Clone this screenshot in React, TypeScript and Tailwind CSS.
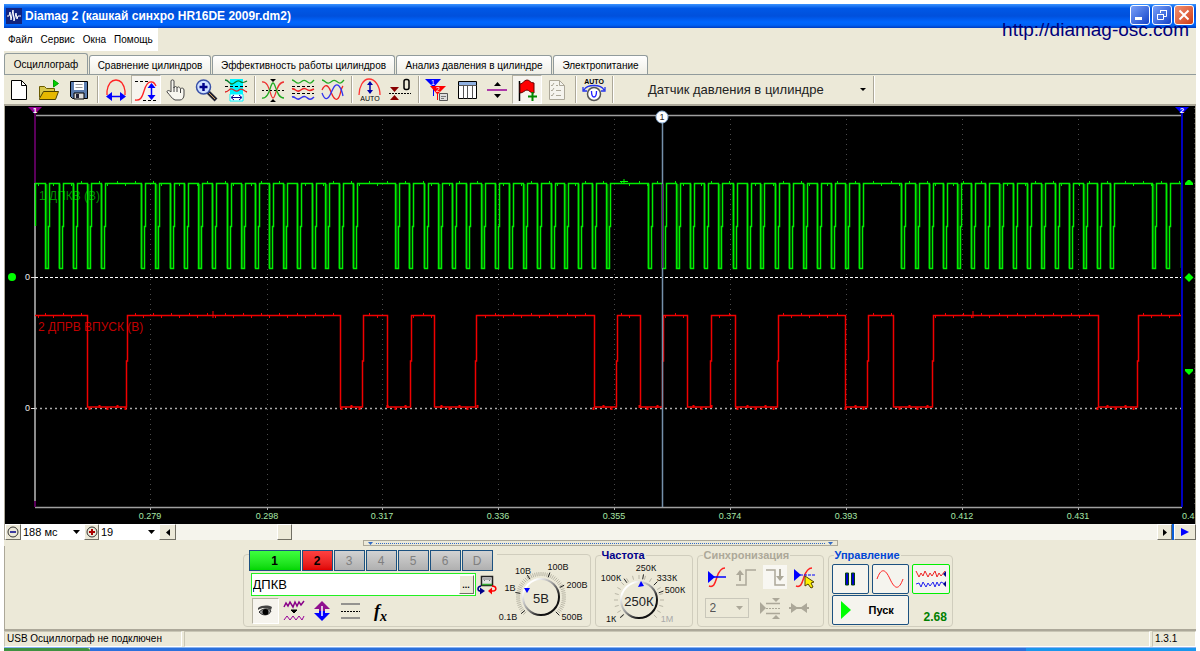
import type { ReactNode } from "react";

const MENU = ["Файл", "Сервис", "Окна", "Помощь"];

const TABS = [
  { label: "Осциллограф", width: "w-[84px]" },
  { label: "Сравнение цилиндров", width: "w-[122px]" },
  { label: "Эффективность работы цилиндров", width: "w-[183px]" },
  { label: "Анализ давления в цилиндре", width: "w-[156px]" },
  { label: "Электропитание", width: "w-[95px]" },
];

// spots where the crankshaft signal drops
const CRANK = [
  46, 60, 74, 88, 102,
  142, 156, 171, 185, 199, 213, 228, 242, 256, 270, 284, 298, 313, 326, 340, 354,
  396, 410, 425, 439, 453, 467, 482, 496, 510, 524, 538, 552, 565, 579, 593, 607,
  649, 663, 677, 691, 705, 719, 734, 748, 761, 776, 790, 804, 818, 832, 846, 860,
  902, 916, 930, 944, 958, 972, 986, 1000, 1014, 1028, 1042, 1056, 1070, 1084, 1098, 1111,
  1153, 1167,
];

// camshaft signal: [drop, rise]
const CAM = [
  [87, 127], [340, 363], [387, 411], [434, 476], [594, 617], [640, 663],
  [687, 711], [735, 778], [845, 868], [893, 933], [1098, 1138],
];

const GRID = [
  { x: 150, label: "0.279" },
  { x: 267, label: "0.298" },
  { x: 382, label: "0.317" },
  { x: 498, label: "0.336" },
  { x: 614, label: "0.355" },
  { x: 730, label: "0.374" },
  { x: 846, label: "0.393" },
  { x: 962, label: "0.412" },
  { x: 1078, label: "0.431" },
];

function crankPath() {
  let d = "M35.5 226V183.5";
  CRANK.forEach((x) => {
    d += `H${x - 0.5}V268.5H${x + 2.5}V226.5H${x + 3.5}V183.5`;
  });
  return d + "H1181.5V268";
}

function crankShade() {
  return CRANK.map((x, i) => `M${x + (i % 3 === 0 ? 0.5 : -0.5)} 184V268`).join("");
}

function camPath() {
  let d = "M35 315.5";
  CAM.forEach(([a, b]) => {
    d += `H${a + 0.5}V407H${b - 0.5}V361H${b + 0.5}V315.5`;
  });
  return d + "H1182";
}

// short ticks along the flat parts
function noise(y: number, skip: (x: number) => boolean) {
  let d = "";
  for (let x = 38; x < 1180; x += 5 + ((x * 7) % 6)) {
    if (!skip(x)) d += `M${x + 0.5} ${y + (x % 3) - 2}v3`;
  }
  return d;
}

const inCrank = (x: number) => CRANK.some((c) => x >= c - 1 && x <= c + 4);
const inCam = (x: number) => CAM.some(([a, b]) => x >= a - 1 && x <= b + 1);

function Scope() {
  return (
    <svg viewBox="5 106 1190 418" className="block w-full bg-black" fontFamily="'Liberation Sans', Arial, sans-serif">
      {/* сетка */}
      <g stroke="#4a4a4a" strokeDasharray="1 4">
        {GRID.map((g) => <path key={g.x} d={`M${g.x + 0.5} 119V507`} />)}
        <path d="M1194.5 108V507" />
      </g>
      <path d="M35 115.5H1182M35 507.5H1182" stroke="#a0a0a0" strokeWidth="1.500" />
      <path d="M35 183V507" stroke="#8c8c8c" strokeWidth="2" />
      <path d="M35 108V183M35 501V507" stroke="#5a005a" strokeWidth="2" />
      <path d="M31 277.5H36M31 408.5H36" stroke="#ddd" />
      <path d="M35 277.5H1182" stroke="#fff" strokeDasharray="3 2" />
      <path d="M35 408.5H1182" stroke="#aaa" strokeWidth="1.500" strokeDasharray="2 3" />

      <text x="39" y="200" fontSize="12" fill="#009000">1 ДПКВ (В)</text>
      <text x="38" y="331" fontSize="12" fill="#c00000">2 ДПРВ ВПУСК (В)</text>

      <path d={crankShade()} stroke="#008000" strokeWidth="2" />
      <path d={crankPath()} fill="none" stroke="#00ee00" strokeWidth="1.500" />
      <path d={noise(183, inCrank)} stroke="#00e800" />
      <path d="M115 183.5h10M620 181.5h8M624 179v4" stroke="#00ff00" />
      <path d={camPath()} fill="none" stroke="#f00000" strokeWidth="1.500" />
      <path d={noise(315, inCam)} stroke="#f00000" />
      <path d={noise(407, (x) => !inCam(x))} stroke="#f00000" strokeWidth="2" />
      <path d="M213 311v7M973 311v7" stroke="#ff0000" />

      {/* курсоры */}
      <path d="M662.5 122V507" stroke="#7590aa" strokeWidth="1.500" />
      <path d="M662.5 184V268" stroke="#6c1690" />
      <circle cx="662" cy="117" r="6" fill="#fff" stroke="#8fb4dd" />
      <text x="662" y="120" fontSize="9" textAnchor="middle" fill="#222">1</text>
      <path d="M1182 112V507" stroke="#0000c0" strokeWidth="2" />
      <path d="M28 107h14l-7 7z" fill="#900090" />
      <path d="M1175 107h14l-7 7z" fill="#0000ff" />
      <g fontSize="8" fontWeight="bold" fill="#fff" textAnchor="middle">
        <text x="35" y="113">1</text>
        <text x="1182" y="113">2</text>
      </g>
      <g fill="#00ff00">
        <circle cx="12" cy="277" r="4" />
        <path d="M1185 185h8v-2l-3-3h-2l-3 3z" />
        <path d="M1189 273l4.500 4.500-4.500 4.500-4.500-4.500z" />
        <path d="M1185 369h8v2l-4 4-4-4z" />
      </g>

      <g fontSize="9" fill="#eee">
        <text x="25" y="280">0</text>
        <text x="25" y="411">0</text>
      </g>
      <g fontSize="9" fill="#a6e6a6">
        {GRID.map((g) => <text key={g.x} x={g.x} y="519" textAnchor="middle">{g.label}</text>)}
        <text x="1182" y="519">0.4</text>
      </g>
      <g stroke="#aaa">{GRID.map((g) => <path key={g.x} d={`M${g.x + 0.5} 508v2`} />)}</g>
    </svg>
  );
}

function Icon({ children }: { children: ReactNode }) {
  return (
    <svg viewBox="0 0 24 24" className="h-6 w-6" fill="none" stroke="#000" aria-hidden="true">
      {children}
    </svg>
  );
}

function Tool({ label, pressed, children }: { label: string; pressed?: boolean; children: ReactNode }) {
  return (
    <button
      type="button"
      aria-label={label}
      aria-pressed={pressed}
      className={`flex h-[29px] w-[30px] items-center justify-center ${pressed ? "border border-t-[#b5b2a2] border-r-white border-b-white border-l-[#b5b2a2] bg-[#f6f4ee]" : ""}`}
    >
      <Icon>{children}</Icon>
    </button>
  );
}

function Sep() {
  return (
    <div className="flex w-[7px] justify-center">
      <div className="h-[27px] w-[2px] border-r border-l border-r-white border-l-[#aca899]" />
    </div>
  );
}

function Toolbar() {
  return (
    <div className="flex h-[30px] items-center border-t border-[#919b9c] bg-[#ece9d8]">
      <Tool label="Новый">
        <path d="M4.500 2.500h10l5 5v14h-15z" fill="#fff" />
        <path d="M14.500 2.500v5h5" />
      </Tool>
      <Tool label="Открыть">
        <path d="M2.500 19.500v-11h5l2 2h8v3" fill="#d8c84c" stroke="#6b5c00" />
        <path d="M2.500 20.500l4-7h15l-3 8h-16z" fill="#e6b800" stroke="#4d4200" />
        <path d="M16.500 2v7l5-3.500z" fill="#00d000" stroke="#00a000" />
      </Tool>
      <Tool label="Сохранить">
        <path d="M3.500 3.500h17v17h-15l-2-2z" fill="#5a7cae" />
        <path d="M7 4h10v8h-10z" fill="#fff" stroke="none" />
        <path d="M8.500 6.500h7M8.500 9.500h7" stroke="#999" />
        <path d="M7 15h10v6h-10z" fill="#ddd" />
        <path d="M9 16h3v4h-3z" fill="#223" stroke="none" />
      </Tool>
      <Sep />
      <Tool label="Масштаб по горизонтали">
        <path d="M3 17v-4c1-6 4-11 9-11s8 5 9 11v4" stroke="#f22" strokeWidth="1.300" />
        <path d="M5 18.500h14" stroke="#00f" strokeWidth="1.500" />
        <path d="M2 18.500l6-4.500v9zM22 18.500l-6-4.500v9z" fill="#00f" stroke="none" />
      </Tool>
      <Tool label="Масштаб по вертикали" pressed>
        <path d="M1 3.500h14M9 22.500h14" strokeDasharray="3 2" />
        <path d="M1 22c5 1 7-2 9-9s4-10 8-9c2 0 3 2 4 4" stroke="#f22" strokeWidth="1.300" />
        <path d="M17.500 7v13" stroke="#00f" strokeWidth="1.500" />
        <path d="M17.500 5l-4 5h8zM17.500 22l-4-5h8z" fill="#00f" stroke="none" />
      </Tool>
      <Tool label="Перемещение">
        <path d="M7 14V3c0-1.500 3-1.500 3 0v7c0-2 3-2 3 0 1-2 3-1 3.500 1 1-1.500 3.500-1 3.500 1v5c0 3-2 5-4 5h-5c-3-1-5-5-8-8 0-2 2-2 4 0" fill="#f8f7f0" stroke="#444" />
        <path d="M10 9v5M13 10v4M16.500 11v4" stroke="#444" />
      </Tool>
      <Tool label="Увеличить">
        <path d="M14 14l8 8" strokeWidth="4" stroke="#223" />
        <path d="M15 15l6 6" stroke="#d0a060" />
        <circle cx="9.500" cy="9" r="7" fill="#cfe0ff" stroke="#3850a8" strokeWidth="1.500" />
        <path d="M5.500 9h8M9.500 5v8" stroke="#00008b" strokeWidth="2.500" />
      </Tool>
      <Tool label="Область">
        <path d="M6 1h13v22H6z" fill="#00f4ff" stroke="none" />
        <path d="M1 2c4 0 4 4 7 4s4-4 7-3 3 3 8 0" stroke="#087a28" strokeWidth="1.300" />
        <path d="M1 8.500h22" strokeDasharray="3 2" />
        <path d="M1 14c4 0 4-4 7-3s4 4 7 1 4 1 8 2" stroke="#d22" strokeWidth="1.300" />
        <path d="M6 16h13v7H6z" fill="#fff" stroke="#00f4ff" />
        <path d="M8 19.500h9M10 17l-3 2.500 3 2.500M15 17l3 2.500-3 2.500" stroke="#008" />
      </Tool>
      <Sep />
      <Tool label="Центр">
        <path d="M1 4c8-1 8 16 11 16s3-16 11-16" stroke="#e33" strokeWidth="1.300" />
        <path d="M1 20c8 1 8-15 11-15s3 15 11 15" stroke="#2a2" strokeWidth="1.300" />
        <path d="M1 12.500h22" strokeDasharray="2 2" />
        <path d="M9 1h6l-3 3zM9 24h6l-3-3z" fill="#000" stroke="none" />
      </Tool>
      <Tool label="Разнести">
        <path d="M1 2c3 0 4 4 7 3s4-4 7-2 4 4 8-1" stroke="#2a2" strokeWidth="1.300" />
        <path d="M1 8.500h22M1 15.500h22" strokeDasharray="3 2" />
        <path d="M1 11c3-1 4 3 7 2s4-4 7-2 4 2 8 0" stroke="#e22" strokeWidth="1.500" />
        <path d="M1 19c3-1 4 3 7 2s4-4 7-2 4 4 8 0" stroke="#33e" strokeWidth="1.500" />
      </Tool>
      <Tool label="Совместить">
        <path d="M1 2c3 0 4 4 7 3s4-4 7-2 4 4 8-1" stroke="#2a2" strokeWidth="1.300" />
        <path d="M1 12c3-6 6-6 9 2s6 9 8 5 2-9 4-11" stroke="#e22" strokeWidth="1.300" />
        <path d="M1 15c3 8 6 7 9 0s5-10 8-7 3 6 4 10" stroke="#33e" strokeWidth="1.300" />
      </Tool>
      <Sep />
      <Tool label="Авто масштаб">
        <path d="M1 17c0-8 4-16 10-16s11 7 11 16" stroke="#f33" strokeWidth="1.300" />
        <path d="M12 5v8" stroke="#00a" strokeWidth="1.500" />
        <path d="M12 3l-3 4h6zM12 16l-3-4h6z" fill="#00a" stroke="none" />
        <text x="12" y="23" fontSize="7" textAnchor="middle" fill="#000" stroke="none" fontFamily="Liberation Sans, sans-serif">AUTO</text>
      </Tool>
      <Tool label="Установить ноль">
        <path d="M2 9h9l-4.500 5zM2 22h9l-4.500-5z" fill="#800" stroke="none" />
        <path d="M1 15.500h22" strokeDasharray="2 1" />
        <rect x="16" y="1.500" width="5" height="10" rx="2" strokeWidth="1.500" />
      </Tool>
      <Sep />
      <Tool label="Маркеры">
        <path d="M0 1h16L9 9v9H8V9z" fill="#00f" stroke="none" />
        <path d="M5 8h16l-8 8v6h-1v-6z" fill="#f00" stroke="none" />
        <path d="M14.500 15.500h8v7h-8z" fill="#ddd" stroke="#555" />
        <path d="M16 18.500h5M16 20.500h3" stroke="#777" />
        <text x="6" y="7" fontSize="7" fill="#fff" stroke="none">1</text>
        <text x="11" y="14" fontSize="7" fill="#fff" stroke="none">2</text>
      </Tool>
      <Tool label="Таблица">
        <path d="M3.500 3.500h18v17h-18z" fill="#fff" />
        <path d="M4 4h17v3H4z" fill="#8fb0e0" stroke="none" />
        <path d="M3.500 7.500h18M8.500 7.500v13M12.500 7.500v13M17.500 7.500v13" stroke="#555" />
      </Tool>
      <Tool label="Разделить">
        <path d="M2 12h20" stroke="#909" strokeWidth="1.500" />
        <path d="M9 8h7l-3.500-4zM9 16h7l-3.500 4z" fill="#000" stroke="none" />
      </Tool>
      <Tool label="Добавить флаг" pressed>
        <path d="M4.500 3v20" strokeWidth="1.500" />
        <path d="M5 6c3 0 4-4 7-4s3 3 7 3v10c-4 0-5-3-7-3s-4 3-7 3z" fill="#f00" stroke="#600" />
        <path d="M17.500 14v9M13 18.500h9" stroke="#080" strokeWidth="2" />
      </Tool>
      <Tool label="Список">
        <path d="M4.500 2.500h10l5 5v14h-15z" fill="#f5f4ee" stroke="#aca899" />
        <path d="M14.500 2.500v5h5M6 7l1 1 2-3M6 12l1 1 2-3M6 17l1 1 2-3M11 7.500h2M11 12.500h5M11 17.500h5" stroke="#aca899" />
      </Tool>
      <Sep />
      <Tool label="Авто напряжение">
        <text x="12" y="6" fontSize="7" fontWeight="bold" textAnchor="middle" fill="#000" stroke="none" fontFamily="Liberation Sans, sans-serif">AUTO</text>
        <circle cx="12" cy="16" r="6.500" fill="#fff" stroke="#555" strokeWidth="1.500" />
        <path d="M9.500 13c0 8 5 8 5 0" stroke="#22f" strokeWidth="1.300" />
        <path d="M2 12c3-6 17-6 20 0M1 9v4h4M23 9v4h-4" stroke="#23e" strokeWidth="1.300" />
      </Tool>
      <Sep />
      <button type="button" className="flex h-[28px] w-[254px] items-center justify-between pr-1 pl-8 text-[13px] text-[#222]">
        Датчик давления в цилиндре
        <svg viewBox="0 0 6 4" className="h-1 w-1.5" aria-hidden="true"><path d="M0 0h6L3 3z" /></svg>
      </button>
      <Sep />
    </div>
  );
}

function Dropdown({ label, value, width }: { label: string; value: string; width: string }) {
  return (
    <div className={`relative bg-white ${width}`}>
      <select aria-label={label} className="block h-4 w-full appearance-none px-[2px] text-[11px] leading-4 text-black">
        <option>{value}</option>
      </select>
      <svg viewBox="0 0 7 4" className="pointer-events-none absolute top-1.5 right-1 h-1 w-[7px]" aria-hidden="true">
        <path d="M0 0h7L3.500 4z" />
      </svg>
    </div>
  );
}

const RAISED = "flex h-4 items-center justify-center border border-t-white border-r-[#716f64] border-b-[#716f64] border-l-white bg-[#ece9d8]";

function ScrollRow() {
  return (
    <div className="flex h-4 border-l border-[#aca899] bg-white">
      <button type="button" aria-label="Уменьшить" className={`${RAISED} w-[16px]`}>
        <svg viewBox="0 0 12 12" className="h-3 w-3" fill="none" stroke="#333" aria-hidden="true">
          <circle cx="6" cy="6" r="5" /><path d="M3 6h6" stroke="#00008b" strokeWidth="1.500" />
        </svg>
      </button>
      <Dropdown label="Развёртка" value="188 мс" width="w-[63px]" />
      <button type="button" aria-label="Увеличить" className={`${RAISED} w-[15px]`}>
        <svg viewBox="0 0 12 12" className="h-3 w-3" fill="none" stroke="#333" aria-hidden="true">
          <circle cx="6" cy="6" r="5" /><path d="M3 6h6M6 3v6" stroke="#a00" strokeWidth="2" />
        </svg>
      </button>
      <Dropdown label="Делений" value="19" width="w-[60px]" />
      <button type="button" aria-label="Влево" className={`${RAISED} w-[17px]`}>
        <svg viewBox="0 0 4 7" className="h-[7px] w-1" aria-hidden="true"><path d="M4 0v7L0 3.500z" /></svg>
      </button>
      <div className="flex flex-1 bg-[#f5f4ec] pl-[101px]">
        <div className={`${RAISED} w-[15px]`} />
      </div>
      <button type="button" aria-label="Вправо" className={`${RAISED} w-[15px]`}>
        <svg viewBox="0 0 4 7" className="h-[7px] w-1" aria-hidden="true"><path d="M0 0v7l4-3.500z" /></svg>
      </button>
      <div className="w-[2px] bg-[#0a5fd8]" />
      <button type="button" aria-label="Воспроизвести" className={`${RAISED} w-[22px]`}>
        <svg viewBox="0 0 8 8" className="h-2 w-2" aria-hidden="true"><path d="M0 0v8l8-4z" fill="#00f" /></svg>
      </button>
    </div>
  );
}

type Mark = { text: string; x: number; y: number; muted?: boolean };

const VOLTS: Mark[] = [
  { text: "10В", x: 523, y: 574 },
  { text: "100В", x: 558, y: 570 },
  { text: "1В", x: 510, y: 591 },
  { text: "200В", x: 577, y: 588 },
  { text: "0.1В", x: 508, y: 620 },
  { text: "500В", x: 572, y: 620 },
];

const FREQS: Mark[] = [
  { text: "250К", x: 645, y: 571 },
  { text: "100К", x: 610, y: 581 },
  { text: "333К", x: 666, y: 581 },
  { text: "500К", x: 674, y: 593 },
  { text: "1К", x: 610, y: 622 },
  { text: "1М", x: 666, y: 622, muted: true },
];

function ray(cx: number, cy: number, deg: number, r1: number, r2: number) {
  const a = (deg * Math.PI) / 180;
  const c = Math.cos(a);
  const s = Math.sin(a);
  return `M${cx + r1 * c} ${cy + r1 * s}L${cx + r2 * c} ${cy + r2 * s}`;
}

function Knob({ id, cx, cy, value, marks, step, major }: {
  id: string; cx: number; cy: number; value: string; marks: Mark[]; step: number; major: number[];
}) {
  const minor: string[] = [];
  for (let d = 135; d <= 405; d += step) minor.push(ray(cx, cy, d, 21, 25));
  return (
    <g fontFamily="'Liberation Sans', Arial, sans-serif">
      <defs>
        <linearGradient id={id} x1="0.1" y1="0.1" x2="0.85" y2="0.85">
          <stop offset="0.1" stopColor="#fff" />
          <stop offset="0.5" stopColor="#999" />
          <stop offset="0.85" stopColor="#111" />
        </linearGradient>
      </defs>
      <path d={minor.join("")} stroke="#b9b6a6" />
      <path d={major.map((d) => ray(cx, cy, d, 21, 26)).join("")} stroke="#222" />
      <circle cx={cx} cy={cy} r="18" fill="#ece9d8" stroke={`url(#${id})`} strokeWidth="2" />
      <text x={cx} y={cy + 6} fontSize="13" textAnchor="middle" fill="#222">{value}</text>
      <g fontSize="9" textAnchor="middle">
        {marks.map((m) => <text key={m.text} x={m.x} y={m.y} fill={m.muted ? "#aaa" : "#111"}>{m.text}</text>)}
      </g>
    </g>
  );
}

function Channels() {
  return (
    <section aria-label="Каналы" className="mt-[5px] flex h-[73px] w-[348px] rounded border border-[#d0cdbd]">
      <div className="-mt-[5px] w-[253px] pl-[5px]">
        <div className="flex gap-px bg-[#ece9d8] text-[12px] font-bold">
          <button type="button" className="h-[21px] w-[52px] border border-[#1c5180] bg-linear-to-b from-[#3dff3d] to-[#00d600]">1</button>
          <button type="button" className="h-[21px] w-[31px] border border-[#1c5180] bg-linear-to-b from-[#ff4040] to-[#e00000]">2</button>
          {["3", "4", "5", "6", "D"].map((c) => (
            <button key={c} type="button" className="h-[21px] w-[31px] border border-[#1c5180] bg-linear-to-b from-[#d2d2d2] to-[#b0b0b0] font-normal text-[#808080]">{c}</button>
          ))}
        </div>
        <div className="mt-[2px] flex items-center gap-px pl-0.5">
          <div className="flex h-[23px] w-[225px] flex-none border border-[#22f022] bg-white">
            <input aria-label="Название канала" defaultValue="ДПКВ" className="w-full min-w-0 flex-1 px-px text-[13px] text-black outline-none" />
            <button type="button" aria-label="Выбрать" className="m-px w-[15px] border border-t-white border-r-[#716f64] border-b-[#716f64] border-l-white bg-[#ece9d8] text-[9px] leading-3 font-bold">...</button>
          </div>
          <svg viewBox="0 0 20 20" className="h-5 w-5 flex-none" fill="none" stroke="#222" aria-hidden="true">
            <path d="M4.500 1.500h11v9h-11z" fill="#e4e4e4" strokeWidth="1.500" />
            <path d="M6 4h8M7 6l1-1M12 5l1 1" stroke="#777" />
            <path d="M5 9.500h10" stroke="#3a3" strokeWidth="1.500" />
            <path d="M4 11c-4 1-4 5 0 5" stroke="#008" strokeWidth="1.500" />
            <path d="M3 12.500l5 3.500-5 3.500z" fill="#008" stroke="none" />
            <path d="M15 11c5 0 5 5 1 5h-2" stroke="#f00" strokeWidth="1.500" />
            <path d="M15 12.500l-4 3.500 4 3.500z" fill="#f00" stroke="none" />
          </svg>
        </div>
        <div className="mt-0.5 flex gap-[2px] pl-[3px]">
          <button type="button" aria-label="Видимость" aria-pressed="true" className="flex h-[26px] w-[27px] items-center justify-center border border-t-[#b5b2a2] border-r-white border-b-white border-l-[#b5b2a2] bg-[#f6f4ee]">
            <svg viewBox="0 0 16 14" className="h-[14px] w-4" aria-hidden="true">
              <path d="M1 4c4-3 10-3 14-1l-1 3c-4-2-8-3-13 0z" fill="#444" />
              <path d="M2 8c4-4 9-4 12-1-2 5-9 5-12 1z" fill="#999" stroke="#333" />
              <circle cx="8.500" cy="8" r="3" />
            </svg>
          </button>
          <button type="button" aria-label="Сглаживание" className="flex h-[26px] w-[26px] items-center justify-center">
            <Icon>
              <path d="M2 8l2-4 2 3 2-4 3 5 2-5 2 4 2-4 2 3 3-4" stroke="#808" strokeWidth="1.500" />
              <path d="M9 11h6l-3 3z" fill="#000" />
              <path d="M2 21l3-4 3 4 3-4 3 4 3-4 3 4 2-4" stroke="#909" />
            </Icon>
          </button>
          <button type="button" aria-label="Смещение" className="flex h-[26px] w-[27px] items-center justify-center">
            <Icon>
              <path d="M12 2l8 8h-5v2H9v-2H4z" fill="#90108f" stroke="none" />
              <path d="M12 22l8-8h-5v-2H9v2H4z" fill="#00f" stroke="none" />
              <path d="M12 7v10" stroke="#fff" strokeWidth="1.500" />
            </Icon>
          </button>
          <button type="button" aria-label="Уровни" className="flex h-[26px] w-[26px] items-center justify-center">
            <Icon>
              <path d="M2 5h19M2 19h19" stroke="#777" strokeWidth="1.500" />
              <path d="M2 12.500h19" strokeDasharray="2 1" />
            </Icon>
          </button>
          <button type="button" aria-label="Функция" className="h-[26px] w-[30px] font-['Liberation_Serif',serif] text-[18px] leading-5 font-bold italic">f<sub className="text-[14px]">x</sub></button>
        </div>
      </div>
      <svg viewBox="497 555 93 71" className="h-[71px] w-[93px]" role="img" aria-label="Масштаб 5В">
        <Knob id="k1" cx={541} cy={597} value="5В" marks={VOLTS} step={5} major={[140, 190, 238, 290, 333, 405]} />
        <path d="M524 588h6l-3 5z" fill="#00f" />
      </svg>
    </section>
  );
}

function Legend({ children, color }: { children: ReactNode; color: string }) {
  return <legend className={`ml-[5px] px-px text-[11px] leading-3 font-bold ${color}`}>{children}</legend>;
}

function Controls() {
  return (
    <div className="flex h-[83px] justify-center gap-1 border-l border-[#aca899] pt-[3px] pr-1.5">
      <Channels />

      <fieldset className="h-[78px] w-[98px] rounded border border-[#d0cdbd]">
        <Legend color="text-[#00008b]">Частота</Legend>
        <svg viewBox="595 561 96 66" className="h-[66px] w-[96px]" role="img" aria-label="Частота 250К">
          <Knob id="k2" cx={638} cy={600} value="250К" marks={FREQS} step={15} major={[137, 235, 280, 315, 340]} />
          <path d="M637 587l6-1-3-5z" fill="#00f" />
        </svg>
      </fieldset>

      <fieldset className="h-[78px] w-[127px] rounded border border-[#d0cdbd]">
        <Legend color="text-[#aca899]">Синхронизация</Legend>
        <div className="mt-1 flex justify-between px-[7px]">
          <button type="button" aria-label="По уровню">
            <Icon>
              <path d="M4 21c5 2 6-3 8-9s4-9 8-9" stroke="#f22" strokeWidth="1.500" />
              <path d="M3 12h18" stroke="#00f" strokeWidth="1.500" /><path d="M3 6v12l7-6z" fill="#00f" stroke="none" />
            </Icon>
          </button>
          <button type="button" aria-label="По фронту" disabled>
            <Icon>
              <path d="M2 20h10V5h10" stroke="#aca899" strokeWidth="1.500" />
              <path d="M6 16V9" stroke="#aca899" strokeWidth="2" /><path d="M6 5l-4 5h8z" fill="#aca899" stroke="none" />
            </Icon>
          </button>
          <button type="button" aria-label="По спаду" disabled className="bg-[#f8f7f2]">
            <Icon>
              <path d="M3 5h9v15h10" stroke="#aca899" strokeWidth="1.500" />
              <path d="M17 4v8" stroke="#aca899" strokeWidth="2" /><path d="M17 16l-4-5h8z" fill="#aca899" stroke="none" />
            </Icon>
          </button>
          <button type="button" aria-label="Выбрать уровень">
            <Icon>
              <path d="M4 21c5 2 6-3 8-9s4-9 8-9" stroke="#f22" strokeWidth="1.500" />
              <path d="M4 10h19" stroke="#00f" strokeDasharray="3 1" /><path d="M2 4v12l7-6z" fill="#00f" stroke="none" />
              <path d="M13 11v10l3-2 3 4 2-1-2-4 3-1z" fill="#fff200" stroke="#554400" />
            </Icon>
          </button>
        </div>
        <div className="mt-[7px] flex items-center gap-[5px] pl-[7px]">
          <div className="relative mr-1 w-[44px]">
            <select aria-label="Канал синхронизации" disabled className="block h-5 w-full appearance-none border border-[#c9c7ba] px-1 text-[12px] text-[#555] opacity-100">
              <option>2</option>
            </select>
            <svg viewBox="0 0 7 4" className="pointer-events-none absolute top-2 right-1.5 h-1 w-[7px]" aria-hidden="true"><path d="M0 0h7L3.500 4z" fill="#aca899" /></svg>
          </div>
          <Icon>
            <path d="M2 6v12l6-6z" fill="#aca899" stroke="none" />
            <path d="M8 7.500h14M8 17.500h14" stroke="#aca899" strokeWidth="1.500" />
            <path d="M8 12.500h14" stroke="#aca899" strokeDasharray="2 1" />
            <path d="M14 2h8l-4 4zM14 23h8l-4-4z" fill="#aca899" stroke="none" />
          </Icon>
          <Icon>
            <path d="M2 12h20" stroke="#aca899" strokeWidth="2" />
            <path d="M4 7v10l7-5zM20 7v10l-7-5z" fill="#aca899" stroke="none" />
          </Icon>
        </div>
      </fieldset>

      <fieldset className="h-[78px] w-[125px] rounded border border-[#d0cdbd]">
        <Legend color="text-[#0046d5]">Управление</Legend>
        <div className="mt-[3px] flex gap-[3px] pl-[3px]">
          <button type="button" aria-label="Пауза" className="flex h-[30px] w-[37px] items-center justify-center rounded-xs border border-[#1c5180] bg-[#f5f4ee]">
            <svg viewBox="0 0 12 14" className="h-[14px] w-3" stroke="#084808" fill="#0000d0" aria-hidden="true"><path d="M1.500 1h3v12h-3zM7.500 1h3v12h-3z" /></svg>
          </button>
          <button type="button" aria-label="Синус" className="flex h-[30px] w-[37px] items-center justify-center rounded-xs border border-[#1c5180] bg-[#f5f4ee]">
            <svg viewBox="0 0 28 20" className="h-5 w-7" fill="none" stroke="#f22" aria-hidden="true"><path d="M1 10C5-1 9-1 14 10s9 11 13 0" /></svg>
          </button>
          <button type="button" aria-label="Шум" className="flex h-[30px] w-[38px] items-center justify-center rounded-xs border border-[#00f000] bg-[#f5f4ee]">
            <svg viewBox="0 0 32 20" className="h-5 w-8" fill="none" aria-hidden="true">
              <path d="M1 2l3 6 2-4 2 3 2-5 3 6 2-4 2 3 3-5 2 6 2-4 2 3 4-5" stroke="#e22" />
              <path d="M1 15l3-1 2 4 2-5 3 5 2-4 2 3 3-4 2 5 2-5 2 4 2-4 4 2" stroke="#22e" />
              <path d="M31 2v6l-3-3zM31 12v6l-3-3z" fill="#008" />
            </svg>
          </button>
        </div>
        <div className="mt-px flex items-end gap-[15px] pl-[3px]">
          <button type="button" className="flex h-[30px] w-[77px] items-center gap-[18px] rounded-xs border border-[#1c5180] bg-[#f5f4ee] pl-2 text-[11px] font-bold">
            <svg viewBox="0 0 10 18" className="h-[18px] w-[10px]" aria-hidden="true"><path d="M0 0v18l10-9z" fill="#0f0" /></svg>
            Пуск
          </button>
          <output className="text-[12px] leading-4 font-bold text-[#008000]">2.68</output>
        </div>
      </fieldset>
    </div>
  );
}

function Header() {
  return (
    <header className="relative flex h-6 items-center gap-[3px] bg-[linear-gradient(#3a93ff,#0058e6_18%,#0050dc_50%,#0066ff_75%,#0062f5_88%,#003cc0)] px-[2px] text-white">
      <svg viewBox="0 0 16 16" className="h-4 w-4" aria-hidden="true">
        <path d="M0 0h16v16H0z" fill="#12237e" />
        <path d="M1 8h2l1-4 1 8 2-10 1 11 2-8 1 6 1-3h3" fill="none" stroke="#fff" />
      </svg>
      <h1 className="flex-1 text-[12px] font-bold">Diamag 2 (кашкай синхро HR16DE 2009г.dm2)</h1>
      <div className="flex gap-[2px] self-start pt-px">
        <button type="button" aria-label="Свернуть" className="h-5 w-5 rounded-[3px] border border-white bg-linear-to-br from-[#7a9ff8] to-[#1640c8]">
          <svg viewBox="0 0 18 18" aria-hidden="true"><path d="M4 11h7v3H4z" fill="#fff" /></svg>
        </button>
        <button type="button" aria-label="Восстановить" className="h-5 w-5 rounded-[3px] border border-white bg-linear-to-br from-[#7a9ff8] to-[#1640c8]">
          <svg viewBox="0 0 18 18" fill="none" stroke="#fff" aria-hidden="true"><path d="M7.500 7V4.500h6v6H11M4.500 8.500h6v5h-6zM7 4.500h7M4 8.500h7" /></svg>
        </button>
        <button type="button" aria-label="Закрыть" className="h-5 w-5 rounded-[3px] border border-white bg-linear-to-br from-[#f09070] to-[#d03808]">
          <svg viewBox="0 0 18 18" stroke="#fff" strokeWidth="2" aria-hidden="true"><path d="M4.500 4.500l9 9M13.500 4.500l-9 9" /></svg>
        </button>
      </div>
      <a href="http://diamag-osc.com" className="absolute top-3.5 right-[7px] text-[19px] leading-6 text-[#00007b]">http://diamag-osc.com</a>
    </header>
  );
}

export default function App() {
  return (
    <div className="bg-white px-1 pt-1 font-['Liberation_Sans',Arial,sans-serif] text-black">
      <div className="bg-[#ece9d8]">
        <Header />
        <nav aria-label="Меню" className="flex h-[23px] w-[154px] items-center gap-2 bg-white pl-1 text-[10px]">
          {MENU.map((m) => <button key={m} type="button">{m}</button>)}
        </nav>

        <div role="tablist" className="flex h-[23px] items-end gap-px text-[10px]">
          {TABS.map((t, i) => (
            <button
              key={t.label}
              type="button"
              role="tab"
              aria-selected={i === 0}
              className={`rounded-t-[3px] border border-b-0 border-[#919b9c] whitespace-nowrap ${t.width} ${i === 0 ? "h-[21px] bg-[#ece9d8]" : "h-[19px] bg-linear-to-b from-white to-[#f0efe6]"}`}
            >
              {t.label}
            </button>
          ))}
        </div>

        <Toolbar />
        <main className="border-x border-t-2 border-[#aca899]">
          <Scope />
        </main>
        <ScrollRow />

        <div className="mx-auto flex h-1.5 w-[475px] items-center justify-between border border-[#aca899] px-1">
          <svg viewBox="0 0 5 3" className="h-[3px] w-[5px]" aria-hidden="true"><path d="M0 0h5L2.500 3z" fill="#316ac5" /></svg>
          <div className="mx-[3px] flex-1 border-t border-dotted border-[#316ac5]" />
          <svg viewBox="0 0 5 3" className="h-[3px] w-[5px]" aria-hidden="true"><path d="M0 0h5L2.500 3z" fill="#316ac5" /></svg>
        </div>

        <Controls />

        <footer className="flex h-[18px] gap-[2px] border-t-2 border-[#aca899] text-[10px] leading-[14px]">
          <div className="w-[178px] border border-t-[#c9c6b5] border-r-white border-b-white border-l-[#c9c6b5] pl-[2px] whitespace-nowrap">USB Осциллограф не подключен</div>
          <div className="flex-1 border border-t-[#c9c6b5] border-r-white border-b-white border-l-[#c9c6b5]" />
          <div className="w-[44px] border border-t-[#c9c6b5] border-r-white border-b-white border-l-[#c9c6b5] pl-[2px]">1.3.1</div>
        </footer>
        <div className="flex h-1 border-t border-[#8ab4f0]">
          <div className="w-[86px] rounded-tr bg-[#3f9140]" />
          <div className="flex-1 bg-[#2b70dc]" />
          <div className="w-[170px] bg-[#1a96ec]" />
        </div>
      </div>
    </div>
  );
}
